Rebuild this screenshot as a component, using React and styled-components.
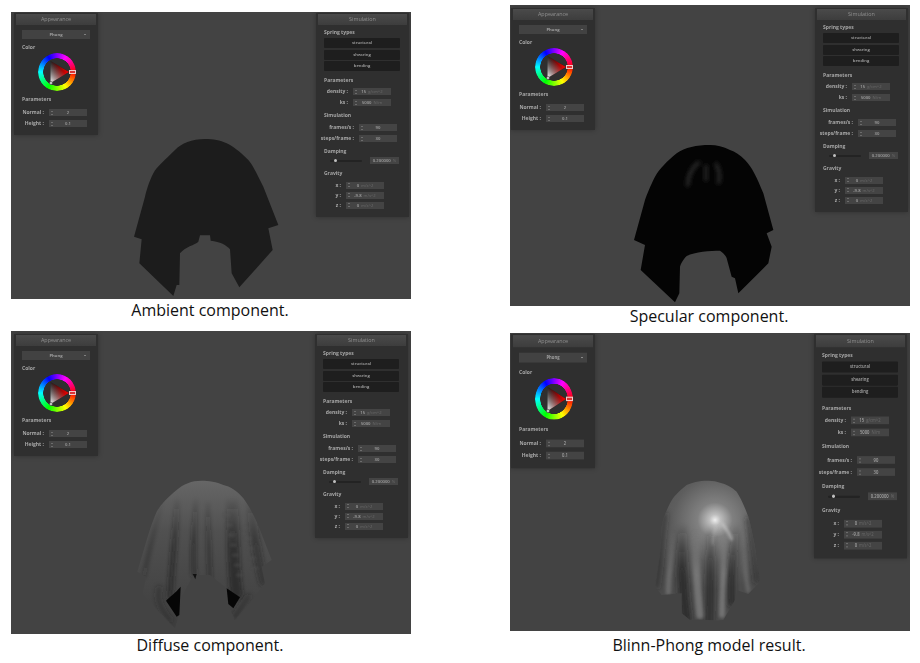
import React from "react";
import styled, { createGlobalStyle } from "styled-components";

const Global = createGlobalStyle`
  html, body { margin: 0; padding: 0; background: #fff; }
  body { font-family: "Open Sans", "Noto Sans", sans-serif; }
`;

const Page = styled.div`
  width: 920px;
  height: 663px;
  overflow: hidden;
  display: grid;
  grid-template-columns: 400px 400px;
  grid-template-rows: 331px 332px;
  column-gap: 99px;
  padding-left: 11px;
  box-sizing: border-box;
`;

const Figure = styled.figure`
  margin: ${(p) => p.$top}px 0 0;
`;

const Viewport = styled.div`
  position: relative;
  width: 400px;
  height: ${(p) => p.$h}px;
  background: #434343;
  overflow: hidden;
`;

const Caption = styled.figcaption`
  margin-top: ${(p) => p.$gap}px;
  padding-right: 2px;
  text-align: center;
  font-size: 16px;
  line-height: 20px;
  color: #111;
`;

const Floating = styled.section`
  position: absolute;
  left: ${(p) => p.$x}px;
  top: ${(p) => p.$y}px;
  width: ${(p) => p.$w}px;
  box-sizing: border-box;
  padding: 1px 2px 7px;
  background: #2f2f2f;
  box-shadow: 0 0 5px rgba(0, 0, 0, 0.3);
  transform: scaleY(${(p) => p.$stretch});
  transform-origin: top left;
  filter: blur(0.4px);
  color: #a4a4a4;
  font-size: 5px;
  line-height: 9px;
  display: flex;
  flex-direction: column;
`;

const Header = styled.header`
  height: 11px;
  line-height: 11px;
  text-align: center;
  color: #909090;
  font-size: 5.4px;
  background: linear-gradient(#4a4a4a, #3d3d3d);
  margin-bottom: 2.5px;
`;

const Title = styled.div`
  height: 9px;
  padding-left: ${(p) => p.$indent}px;
  font-weight: 700;
  color: #a6a6a6;
  margin-top: ${(p) => p.$mt ?? 4}px;
  margin-bottom: ${(p) => p.$mb ?? 2.5}px;
`;

const Select = styled.div`
  position: relative;
  height: 9px;
  margin: 2.5px 6px 3.5px 6px;
  background: #424242;
  text-align: center;
  color: #a0a0a0;
  font-weight: 700;
  font-size: 4.2px;
  &::after {
    content: "";
    position: absolute;
    right: 4px;
    top: 4px;
    border: 1px solid transparent;
    border-top-color: #bbb;
    border-bottom-width: 0;
  }
`;

const SpringButton = styled.div`
  height: 10px;
  line-height: 10px;
  margin: 0 7px 1.5px 6px;
  background: #1e1e1e;
  border-radius: 1px;
  text-align: center;
  font-size: 4.2px;
  color: #a8a8a8;
  font-weight: 600;
`;

const Row = styled.div`
  display: flex;
  align-items: center;
  height: 9px;
  margin-bottom: ${(p) => p.$gap ?? 2}px;
`;

const RowLabel = styled.span`
  width: ${(p) => p.$w}px;
  flex: none;
  text-align: right;
  font-weight: 700;
  color: #a8a8a8;
  margin-right: 5px;
`;

const ValueBox = styled.div`
  width: ${(p) => p.$w ?? 38}px;
  height: 7px;
  line-height: 7px;
  flex: none;
  background: #444;
  display: flex;
  justify-content: center;
  gap: 2px;
  color: #a2a2a2;
  font-size: 4.2px;
  font-weight: 600;
`;

const Field = styled(ValueBox)`
  position: relative;
  &::before {
    content: "";
    position: absolute;
    left: 2px;
    top: 1.5px;
    width: 1.5px;
    height: 4px;
    border-top: 1px solid #6c6c6c;
    border-bottom: 1px solid #6c6c6c;
    box-sizing: border-box;
  }
`;

const Unit = styled.span`
  color: #6a6a6a;
  font-weight: 400;
`;

const SliderRow = styled.div`
  display: flex;
  align-items: center;
  height: 9px;
  padding-left: 12px;
`;

const SliderTrack = styled.div`
  position: relative;
  width: 32px;
  height: 2px;
  border-radius: 1px;
  background: #232323;
  margin-right: 8px;
  &::after {
    content: "";
    position: absolute;
    left: 4px;
    top: -0.5px;
    width: 3px;
    height: 3px;
    border-radius: 50%;
    background: #c0c0c0;
  }
`;

const WheelBox = styled.div`
  position: relative;
  height: 38px;
  width: 38px;
  margin: 0 0 0 22px;
`;

const Ring = styled.div`
  position: absolute;
  inset: 0;
  border-radius: 50%;
  background: conic-gradient(from 90deg, #f00, #ff0, #0f0, #0ff, #00f, #f0f, #f00);
  -webkit-mask: radial-gradient(circle, transparent 13.5px, #000 14px);
  mask: radial-gradient(circle, transparent 13.5px, #000 14px);
`;

const Marker = styled.div`
  position: absolute;
  left: 31px;
  top: 17px;
  width: 6.5px;
  height: 4px;
  box-sizing: border-box;
  border: 0.8px solid #f3c9c9;
  background: #d93535;
`;

const ClothLayer = styled.svg`
  position: absolute;
  left: ${(p) => p.$x}px;
  top: ${(p) => p.$y}px;
  width: ${(p) => p.$w}px;
  height: ${(p) => p.$h}px;
`;

const WheelDrawing = styled.svg`
  position: absolute;
  left: 0;
  top: 0;
`;

function Wheel({ id }) {
  return (
    <WheelBox>
      <Ring />
      <WheelDrawing width="38" height="38" viewBox="0 0 38 38">
        <defs>
          <linearGradient id={id + "r"} x1="1" y1="0.5" x2="0" y2="0.5">
            <stop offset="0" stopColor="#f00" />
            <stop offset="1" stopColor="#f00" stopOpacity="0" />
          </linearGradient>
          <linearGradient id={id + "w"} x1="0" y1="1" x2="0.55" y2="0.35">
            <stop offset="0" stopColor="#fff" />
            <stop offset="1" stopColor="#aaa" stopOpacity="0" />
          </linearGradient>
        </defs>
        <polygon points="31,19 12.5,8 12.5,30" fill="#111" />
        <polygon points="31,19 12.5,8 12.5,30" fill={`url(#${id}r)`} />
        <polygon points="31,19 12.5,8 12.5,30" fill={`url(#${id}w)`} />
        <circle cx="13" cy="30" r="1.6" fill="#ccc" stroke="#333" strokeWidth="0.5" />
      </WheelDrawing>
      <Marker />
    </WheelBox>
  );
}

function Appearance({ x, y, stretch = 1, id }) {
  return (
    <Floating $x={x} $y={y} $w={84} $stretch={stretch}>
      <Header>Appearance</Header>
      <Select>Phong</Select>
      <Title $indent={6} $mt={0} $mb={1}>Color</Title>
      <Wheel id={id} />
      <Title $indent={6} $mt={4.5} $mb={4}>Parameters</Title>
      <Row>
        <RowLabel $w={28}>Normal :</RowLabel>
        <Field>2</Field>
      </Row>
      <Row $gap={0}>
        <RowLabel $w={28}>Height :</RowLabel>
        <Field>0.1</Field>
      </Row>
    </Floating>
  );
}

function Simulation({ x, y, stretch = 1 }) {
  return (
    <Floating $x={x} $y={y} $w={93} $stretch={stretch}>
      <Header>Simulation</Header>
      <Title $indent={6} $mt={0} $mb={1.5}>Spring types</Title>
      <SpringButton>structural</SpringButton>
      <SpringButton>shearing</SpringButton>
      <SpringButton>bending</SpringButton>
      <Title $indent={6} $mt={3}>Parameters</Title>
      <Row>
        <RowLabel $w={30}>density :</RowLabel>
        <Field>15 <Unit>g/cm^2</Unit></Field>
      </Row>
      <Row $gap={0}>
        <RowLabel $w={30}>ks :</RowLabel>
        <Field>5000 <Unit>N/m</Unit></Field>
      </Row>
      <Title $indent={6} $mb={3}>Simulation</Title>
      <Row>
        <RowLabel $w={36}>frames/s :</RowLabel>
        <Field>90</Field>
      </Row>
      <Row $gap={0}>
        <RowLabel $w={36}>steps/frame :</RowLabel>
        <Field>30</Field>
      </Row>
      <Title $indent={6} $mb={0}>Damping</Title>
      <SliderRow>
        <SliderTrack />
        <ValueBox $w={29}>0.200000 <Unit>%</Unit></ValueBox>
      </SliderRow>
      <Title $indent={6} $mb={2.5}>Gravity</Title>
      <Row $gap={1}>
        <RowLabel $w={23}>x :</RowLabel>
        <Field>0 <Unit>m/s^2</Unit></Field>
      </Row>
      <Row $gap={1}>
        <RowLabel $w={23}>y :</RowLabel>
        <Field>-9.8 <Unit>m/s^2</Unit></Field>
      </Row>
      <Row $gap={0}>
        <RowLabel $w={23}>z :</RowLabel>
        <Field>0 <Unit>m/s^2</Unit></Field>
      </Row>
    </Floating>
  );
}

function Ambient({ x, y }) {
  return (
    <ClothLayer $x={x} $y={y} $w={170} $h={190} viewBox="0 0 510 570">
      <path
        fill="#1c1c1c"
        d="M255 27 C215 27 185 40 165 60 C135 90 110 110 100 130 C85 160 80 180 75 200 L42 320 L65 328 L58 400 L160 498 L170 465 L178 465 L180 370 C195 350 225 345 235 335 L240 316 L270 316 L272 332 C300 335 320 345 330 358 L335 430 L358 472 L458 360 L445 295 L475 285 L430 170 C410 130 395 100 385 90 C360 65 340 50 320 40 C300 30 280 27 255 27Z"
      />
    </ClothLayer>
  );
}

function Specular({ x, y }) {
  return (
    <ClothLayer $x={x} $y={y} $w={170} $h={190} viewBox="0 0 510 570">
      <defs>
        <filter id="sb" x="-50%" y="-50%" width="200%" height="200%">
          <feGaussianBlur stdDeviation="7" />
        </filter>
      </defs>
      <path
        fill="#040404"
        d="M270 45 C230 45 195 52 170 70 C140 95 120 115 105 140 C90 170 82 190 75 210 L42 330 L75 345 L62 420 L165 517 L178 490 L180 410 C185 395 195 382 200 378 C225 365 270 362 300 362 C310 368 318 378 320 385 L335 440 L345 445 L355 490 L445 400 L455 350 L440 310 L460 300 L430 190 C410 140 395 110 375 90 C360 75 345 65 330 60 C310 50 290 45 270 45Z"
      />
      <g filter="url(#sb)" fill="none" strokeLinecap="round">
        <path d="M203 165 C205 135 218 112 235 98" stroke="#343434" strokeWidth="9" />
        <path d="M258 150 L258 108" stroke="#252525" strokeWidth="10" />
        <path d="M296 158 C300 135 298 118 288 102" stroke="#333" strokeWidth="9" />
      </g>
    </ClothLayer>
  );
}

function Diffuse({ x, y }) {
  const outline =
    "M245 122 C215 122 190 132 170 150 C140 175 122 195 110 215 C95 250 88 275 80 300 L52 395 L78 410 L68 462 L165 565 L175 530 L178 525 L185 470 L220 405 L270 405 L320 445 L325 495 L345 540 L435 430 L425 380 L455 360 L420 270 C405 230 385 195 370 175 C350 150 330 140 310 135 C290 125 265 122 245 122Z";
  return (
    <ClothLayer $x={x} $y={y} $w={170} $h={220} viewBox="0 0 510 660">
      <defs>
        <linearGradient id="dg" x1="0" y1="0" x2="0" y2="1">
          <stop offset="0" stopColor="#666" />
          <stop offset="0.35" stopColor="#505050" />
          <stop offset="1" stopColor="#3e3e3e" />
        </linearGradient>
        <linearGradient id="df" gradientUnits="userSpaceOnUse" x1="0" y1="170" x2="0" y2="320">
          <stop offset="0" stopColor="#202020" stopOpacity="0" />
          <stop offset="1" stopColor="#202020" />
        </linearGradient>
        <clipPath id="dc"><path d={outline} /></clipPath>
        <filter id="db" x="-50%" y="-50%" width="200%" height="200%">
          <feGaussianBlur stdDeviation="7" />
        </filter>
        <filter id="db3" x="-50%" y="-50%" width="200%" height="200%">
          <feGaussianBlur stdDeviation="3.5" />
        </filter>
      </defs>
      <path d={outline} fill="url(#dg)" />
      <g clipPath="url(#dc)">
        <g filter="url(#db)" fill="none" stroke="url(#df)" strokeLinecap="round">
          <path d="M172 170 C168 260 160 330 150 470" strokeWidth="16" opacity="0.6" />
          <path d="M228 170 C224 260 216 330 222 405" strokeWidth="11" opacity="0.75" />
          <path d="M264 190 C264 280 268 360 270 415" strokeWidth="10" opacity="0.6" />
          <path d="M125 190 C100 280 85 340 72 410" strokeWidth="10" opacity="0.3" />
          <path d="M335 170 C342 270 335 370 350 460" strokeWidth="36" opacity="0.6" />
          <path d="M392 190 C402 290 412 360 430 425" strokeWidth="26" opacity="0.45" />
        </g>
        <g filter="url(#db)" fill="none" stroke="#252525" strokeLinecap="round">
          <path d="M118 445 C110 470 115 500 150 540" strokeWidth="16" opacity="0.35" />
          <path d="M385 470 L345 530" strokeWidth="16" opacity="0.35" />
        </g>
        <g filter="url(#db3)" fill="#565656" opacity="0.35">
          {[225, 255, 285, 315, 345, 375, 405].map((cy, i) => (
            <ellipse key={cy} cx={322 + i * 6} cy={cy} rx="12" ry="6" />
          ))}
          {[265, 295, 325, 355, 385].map((cy, i) => (
            <ellipse key={cy} cx={378 + i * 7} cy={cy} rx="12" ry="5" />
          ))}
        </g>
      </g>
      <path d="M138 482 C150 470 165 460 182 440 L178 525 L170 530 Z" fill="#060606" />
      <path d="M320 445 L360 472 L340 505 L325 492 Z" fill="#060606" />
      <path d="M218 402 L230 402 L226 418 Z" fill="#111" />
    </ClothLayer>
  );
}

function Blinn({ x, y }) {
  const outline =
    "M265 122 C235 122 215 128 200 135 C175 155 160 170 150 190 C135 220 128 240 125 260 C122 300 122 320 120 340 L105 440 L125 465 L185 460 L185 520 L210 540 C240 535 280 545 310 540 L345 480 L350 450 L385 462 L420 425 L405 320 C398 285 392 255 385 230 C372 195 360 170 350 155 C335 140 318 132 300 128 C290 124 280 122 265 122Z";
  return (
    <ClothLayer $x={x} $y={y} $w={170} $h={220} viewBox="0 0 510 660">
      <defs>
        <radialGradient id="bg1" gradientUnits="userSpaceOnUse" cx="285" cy="240" r="210">
          <stop offset="0" stopColor="#efefef" />
          <stop offset="0.08" stopColor="#bdbdbd" />
          <stop offset="0.25" stopColor="#808080" />
          <stop offset="0.6" stopColor="#5e5e5e" />
          <stop offset="1" stopColor="#4c4c4c" />
        </radialGradient>
        <linearGradient id="bf" gradientUnits="userSpaceOnUse" x1="0" y1="250" x2="0" y2="400">
          <stop offset="0" stopColor="#202020" stopOpacity="0" />
          <stop offset="1" stopColor="#202020" />
        </linearGradient>
        <linearGradient id="bl" gradientUnits="userSpaceOnUse" x1="0" y1="270" x2="0" y2="400">
          <stop offset="0" stopColor="#8c8c8c" stopOpacity="0" />
          <stop offset="1" stopColor="#8c8c8c" />
        </linearGradient>
        <clipPath id="bc"><path d={outline} /></clipPath>
        <filter id="bb" x="-50%" y="-50%" width="200%" height="200%">
          <feGaussianBlur stdDeviation="8" />
        </filter>
        <filter id="bb2" x="-50%" y="-50%" width="200%" height="200%">
          <feGaussianBlur stdDeviation="5" />
        </filter>
      </defs>
      <path d={outline} fill="url(#bg1)" />
      <g clipPath="url(#bc)">
        <g filter="url(#bb)" fill="none" stroke="url(#bf)" strokeLinecap="round">
          <path d="M190 250 C182 340 185 440 200 540" strokeWidth="28" opacity="0.75" />
          <path d="M272 250 C272 370 270 480 268 560" strokeWidth="24" opacity="0.6" />
          <path d="M350 250 C338 350 330 420 335 490" strokeWidth="22" opacity="0.65" />
        </g>
        <g filter="url(#bb)" fill="none" stroke="#262626" strokeLinecap="round">
          <path d="M135 225 C125 300 120 370 110 440" strokeWidth="16" opacity="0.45" />
          <path d="M388 240 C397 290 402 350 412 420" strokeWidth="22" opacity="0.45" />
        </g>
        <g filter="url(#bb2)" fill="none" stroke="url(#bl)" strokeLinecap="round">
          <path d="M228 280 C225 380 232 450 240 525" strokeWidth="22" opacity="0.6" />
          <path d="M308 280 C318 350 306 430 306 525" strokeWidth="18" opacity="0.6" />
          <path d="M160 280 C150 370 145 420 145 458" strokeWidth="16" opacity="0.45" />
          <path d="M372 280 C372 380 378 420 385 452" strokeWidth="14" opacity="0.35" />
        </g>
        <g filter="url(#bb2)" fill="none" stroke="#d8d8d8" strokeLinecap="round">
          <path d="M308 252 C320 268 328 280 335 298" strokeWidth="6" opacity="0.7" />
          <path d="M285 262 C282 280 280 295 278 312" strokeWidth="6" opacity="0.3" />
        </g>
      </g>
    </ClothLayer>
  );
}

export default function App() {
  return (
    <>
      <Global />
      <Page>
        <Figure $top={12}>
          <Viewport $h={287}>
            <Ambient x={109} y={118} />
            <Appearance id="w1" x={3} y={1} />
            <Simulation x={305} y={1} />
          </Viewport>
          <Caption $gap={1}>Ambient component.</Caption>
        </Figure>
        <Figure $top={5}>
          <Viewport $h={301}>
            <Specular x={110} y={125} />
            <Appearance id="w2" x={1} y={3} />
            <Simulation x={305} y={3} />
          </Viewport>
          <Caption $gap={0}>Specular component.</Caption>
        </Figure>
        <Figure $top={0}>
          <Viewport $h={303}>
            <Diffuse x={109} y={109} />
            <Appearance id="w3" x={3} y={3} />
            <Simulation x={304} y={3} />
          </Viewport>
          <Caption $gap={1}>Diffuse component.</Caption>
        </Figure>
        <Figure $top={2}>
          <Viewport $h={298}>
            <Blinn x={110} y={107} />
            <Appearance id="w4" x={1} y={1} stretch={1.1} />
            <Simulation x={304} y={1} stretch={1.1} />
          </Viewport>
          <Caption $gap={4}>Blinn-Phong model result.</Caption>
        </Figure>
      </Page>
    </>
  );
}
